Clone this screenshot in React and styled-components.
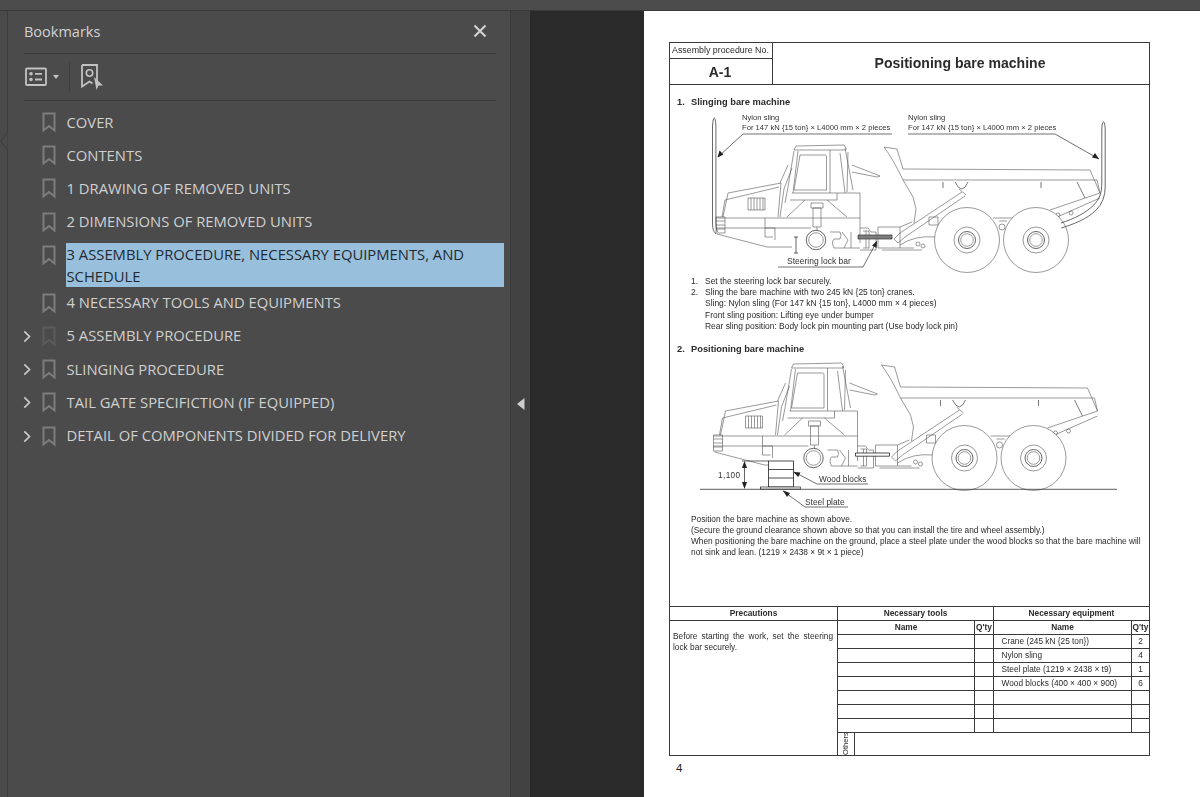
import React from 'react';
import styled, { createGlobalStyle } from 'styled-components';

const Global = createGlobalStyle`
  html, body { margin: 0; padding: 0; background: #4a4a4a; }
  * { box-sizing: border-box; }
`;

const Shell = styled.div`
  width: 1200px; height: 797px; display: flex; flex-direction: column; overflow: hidden;
  font-family: "Open Sans", "Noto Sans", sans-serif;
`;
const TopBar = styled.div`
  height: 11px; flex: none; background: #4c4c4c; border-bottom: 1px solid #393939;
`;
const Workspace = styled.div`flex: 1; min-height: 0; display: flex;`;
const Rail = styled.div`
  position: relative; width: 8px; flex: none; background: #4a4a4a; border-right: 1px solid #3d3d3d;
`;
const RailNotch = styled.svg`position: absolute; left: 0; top: 121px;`;
const Panel = styled.aside`
  width: 502px; flex: none; background: #4b4b4b; display: flex; flex-direction: column;
`;
const PanelHead = styled.div`
  height: 43px; margin: 0 14px 0 16px; flex: none; display: flex; align-items: center;
  justify-content: space-between; border-bottom: 1px solid #3c3c3c;
`;
const PanelTitle = styled.h2`
  margin: 0; font-size: 14.5px; line-height: 20px; font-weight: 400; color: #d2d2d2;
`;
const CloseButton = styled.button`
  width: 16px; height: 16px; margin-right: 8px; padding: 0; background: none; border: 0; display: flex;
  align-items: center; justify-content: center; position: relative; top: -1px;
`;
const Toolbar = styled.div`
  height: 47px; margin: 0 14px 0 16px; flex: none; display: flex; align-items: center;
  border-bottom: 1px solid #3c3c3c;
`;
const ToolIcon = styled.svg`display: block; flex: none; margin-left: ${p => p.$left || 0}px;`;
const ToolSep = styled.span`width: 1px; height: 30px; background: #3f3f3f; margin: 0 11px 0 10px;`;
const Tree = styled.div`padding-top: 5px; flex: 1;`;
const Row = styled.div`
  height: ${p => (p.$tall ? '48px' : '33.2px')}; display: flex; align-items: flex-start; padding-left: 15px; padding-right: 6px;
`;
const Twist = styled.span`
  width: 8px; height: 33px; flex: none; display: flex; align-items: center; justify-content: center;
`;
const Mark = styled.span`
  width: 14px; height: 33px; flex: none; margin-left: 11px; display: flex; align-items: center; justify-content: center;
`;
const Label = styled.div`
  margin: 4.5px 0 0 10px; padding: 0 4px 0 0.5px; flex: 1; font-size: 14.8px; line-height: 22px;
  color: ${p => (p.$selected ? '#1f2a33' : '#d0d0d0')};
  background: ${p => (p.$selected ? '#98c0dc' : 'transparent')};
  white-space: ${p => (p.$selected ? 'normal' : 'nowrap')};
`;
const Splitter = styled.div`
  position: relative; width: 20px; flex: none; background: #424242; border-left: 1px solid #393939;
`;
const SplitArrow = styled.svg`position: absolute; left: 6px; top: 387px;`;
const Viewer = styled.main`flex: 1; background: #2a2a2a; padding-left: 114px; display: flex;`;
const Sheet = styled.div`
  flex: 1; background: #fff; padding: 31px 0 0 25px; color: #2b2b2b;
  font-family: "Liberation Sans", Arial, sans-serif;
`;
const Frame = styled.div`
  width: 481px; height: 714px; border: 1px solid #3a3a3a; display: flex; flex-direction: column; filter: blur(0.3px);
`;
const DocHead = styled.header`
  height: 42px; flex: none; display: grid; grid-template-columns: 103px 1fr; border-bottom: 1px solid #3a3a3a;
`;
const DocNumber = styled.div`display: flex; flex-direction: column; border-right: 1px solid #3a3a3a;`;
const DocNumberLabel = styled.div`
  height: 16px; font-size: 8.85px; line-height: 15px; padding-left: 2px; border-bottom: 1px solid #3a3a3a; white-space: nowrap;
`;
const DocNumberValue = styled.div`
  flex: 1; display: flex; align-items: center; justify-content: center; font-weight: 700; font-size: 14px; padding-right: 2px;
`;
const DocTitle = styled.h1`
  margin: 0; padding-right: 2px; display: flex; align-items: center; justify-content: center; font-size: 14.05px; font-weight: 700;
  position: relative; top: -1px;
`;
const DocBody = styled.section`flex: 1; min-height: 0; padding-top: 11.5px;`;
const SectionTitle = styled.h3`
  margin: ${p => p.$gap || 0}px 0 0 7px; font-size: 9.3px; line-height: 11px; font-weight: 700; display: flex; color: #2b2b2b;
`;
const Num = styled.span`width: 14px; flex: none;`;
const Figure = styled.svg`display: block; width: 478px;`;
const Steps = styled.ol`
  list-style: none; margin: 3.5px 0 0 21px; padding: 0; font-size: 8.45px; line-height: 11.2px;
`;
const Step = styled.li`display: flex; white-space: nowrap;`;
const Para = styled.p`
  margin: 1.5px 4px 0 21px; font-size: 8.33px; line-height: 11px;
`;
const Sheetlet = styled.div`
  height: 149px; flex: none; display: grid; font-size: 8.3px;
  grid-template-columns: 168px 137px 19px 138px 1fr;
  grid-template-rows: repeat(9, 14px) 22px; border-top: 1px solid #3a3a3a;
`;
const Cell = styled.div`
  display: flex; align-items: center; overflow: hidden; white-space: nowrap; padding-bottom: 2px;
  justify-content: ${p => (p.$center ? 'center' : 'flex-start')};
  padding-left: ${p => (p.$center ? 0 : 7.5)}px;
  font-weight: ${p => (p.$bold ? 700 : 400)};
  border-right: ${p => (p.$last ? 0 : '1px solid #3a3a3a')};
  border-bottom: 1px solid #3a3a3a;
  grid-column: ${p => p.$col || 'auto'};
`;
const Caution = styled.div`
  grid-column: 1; grid-row: 2 / span 9; border-right: 1px solid #3a3a3a; padding: 9.5px 4px 0 3px;
  line-height: 11px; font-size: 8.3px; text-align: justify; border-top: 1px solid #3a3a3a; margin-top: -1px;
`;
const Others = styled.div`
  grid-column: 2 / span 4; display: flex; min-width: 0;
`;
const OthersLabel = styled.div`
  width: 17px; border-left: 1px solid #3a3a3a; writing-mode: vertical-rl; transform: rotate(180deg);
  font-size: 7.6px; line-height: 16px; text-align: left;
`;
const PageNo = styled.div`margin: 5px 0 0 7px; font-size: 11.5px; line-height: 14px; color: #222;`;

const Bookmark = ({ dim }) => (
  <svg width="14" height="21" viewBox="0 0 14 21">
    <path d="M1.5 1.5h11v17l-5.5-4.5-5.5 4.5z" fill="none" stroke={dim ? '#5c5c5c' : '#7d7d7d'} strokeWidth="2" />
  </svg>
);
const Chevron = () => (
  <svg width="8" height="13" viewBox="0 0 8 13">
    <path d="M1.3 1.3 6.5 6.5 1.3 11.7" fill="none" stroke="#c9c9c9" strokeWidth="1.7" />
  </svg>
);

const items = [
  { t: 'COVER' },
  { t: 'CONTENTS' },
  { t: '1 DRAWING OF REMOVED UNITS' },
  { t: '2 DIMENSIONS OF REMOVED UNITS' },
  { t: '3 ASSEMBLY PROCEDURE, NECESSARY EQUIPMENTS, AND SCHEDULE', selected: true },
  { t: '4 NECESSARY TOOLS AND EQUIPMENTS' },
  { t: '5 ASSEMBLY PROCEDURE', kids: true, dim: true },
  { t: 'SLINGING PROCEDURE', kids: true },
  { t: 'TAIL GATE SPECIFICTION (IF EQUIPPED)', kids: true },
  { t: 'DETAIL OF COMPONENTS DIVIDED FOR DELIVERY', kids: true },
];

const Wheel = ({ cx }) => (
  <g>
    <circle cx={cx} cy="240" r="32.5" fill="#fff" />
    <circle cx={cx} cy="240" r="13" />
    <circle cx={cx} cy="240" r="8.5" strokeWidth="0.9" />
    <circle cx={cx} cy="240" r="6.3" />
  </g>
);

const Truck = ({ shift, solidBar }) => (
  <g transform={shift} fill="none" stroke="#555" strokeWidth="0.6" strokeLinejoin="round">
    {/* dump body */}
    <path d="M884 147l13 2 6 20 187 1 10 23" />
    <path d="M884 147q9 12 19 33h194l3 13" />
    <path d="M903 180l10 17 3 12-2 14" />
    <path d="M1077 182l8 16M943 182v6M1041 182v6M955 182q7 14 13 0" strokeWidth="0.8" />
    {/* hoist cylinder */}
    <path d="M962 192l-62 41M965 196l-60 41M959 189l7 6" />
    <path d="M900 233l-6 6 4 4 7-6" />
    <rect x="929" y="217" width="9" height="8" />
    {/* rear frame */}
    <path d="M1050 210l50-17M1057 217l43-19M993 218h20M999 221h8" />
    <circle cx="1002" cy="227" r="3" />
    <circle cx="1058" cy="215" r="2" />
    <circle cx="1071" cy="213" r="2" />
    <path d="M900 245q15 -10 35 -8M882 250h40" />
    <circle cx="918" cy="244" r="2" />
    <circle cx="923" cy="246" r="2" />
    {/* cab */}
    <path d="M794 150l2-4 48-1 2 3v2z" />
    <path d="M794 151l-6 36-3 16M798 151l-5 42M845 148l8 42M830 150v43M840 153l5 40M848 152l-1 40" />
    <path d="M800 155h25q1.500 0 1.500 1.500V190H794z" />
    <path d="M852 165l28 11M852 172l25 5M877 177l3-1" />
    <path d="M788 165l-8 18M792 168l-8 21M784 189l-4 28" />
    <path d="M792 193h45" />
    {/* hood */}
    <path d="M728 193l53-10M725 200l54-13M728 193l-5 24M725 200l-3 17M781 183l-3 34" />
    <rect x="748" y="198" width="17" height="12" />
    <path d="M751 198v12M754 198v12M757 198v12M760 198v12M763 198v12" />
    <rect x="716" y="217" width="9" height="16" />
    <path d="M716 221h9M716 225h9M716 229h9M716 218h144M716 228h95M717 234l50 13h25" />
    <path d="M765 218v19h8M765 228h10v12" />
    {/* frame and block */}
    <path d="M837 193h23v50M837 193v7M790 200h47M805 200l-18 17M827 200l20 17" />
    <rect x="813" y="208" width="8" height="19" />
    <path d="M811 203h12v5h-12zM817 227v4" />
    <circle cx="816" cy="240" r="9.700" fill="#fff" strokeWidth="0.9" />
    <circle cx="816" cy="240" r="7.300" />
    <path d="M830 232h10q2 3 0 7h-6q-3 3 0 9h26M842 232l6 8-4 8M851 232v16" />
    <path d="M860 228h8l3 4h5v18h-16" />
    <path d="M863 231h6v17h-6M866 231v17" />
    <rect x="878" y="227" width="22" height="21" />
    <path d="M900 227l12-5M900 248h14" />
    <Wheel cx={967} />
    <Wheel cx={1036} />
    {solidBar
      ? <rect x="858" y="235" width="34" height="4" fill="#7d7d7d" stroke="#333" strokeWidth="0.7" />
      : <rect x="858" y="235" width="34" height="3.200" fill="#fff" stroke="#222" strokeWidth="0.8" />}
  </g>
);

const Lead = ({ d, head }) => (
  <g>
    <path d={d} fill="none" stroke="#333" strokeWidth="0.7" />
    <path d={head} fill="#222" />
  </g>
);
const Note = styled.text`
  font-family: "Liberation Sans", Arial, sans-serif; font-size: ${p => p.$size || 8.4}px; fill: #333;
`;

const FigureOne = () => (
  <Figure viewBox="670 108 478 165" height="165">
    <Truck solidBar />
    <path d="M716 234c-3-3-3.500-6-3.500-12V126q.5-8 1.700-8 1.300 0 1.700 8V222q0 6 1.500 10" fill="none" stroke="#444" strokeWidth="0.8" />
    <path d="M1103.500 122q-1.500 0-1.700 8V185q0 12-8 20c-8 8-20 14-33 18" fill="none" stroke="#444" strokeWidth="0.8" />
    <path d="M1103.500 122q1.500 0 1.700 8V187q0 14-9 23c-9 9-22 14-35 18" fill="none" stroke="#444" strokeWidth="0.8" />
    <Note $size={7.65} x="742" y="120">Nylon sling</Note>
    <Note $size={7.65} x="742" y="130">For 147 kN {'{'}15 ton{'}'} × L4000 mm × 2 pieces</Note>
    <Note $size={7.65} x="908" y="120">Nylon sling</Note>
    <Note $size={7.65} x="908" y="130">For 147 kN {'{'}15 ton{'}'} × L4000 mm × 2 pieces</Note>
    <Lead d="M892 134H743L718 157" head="M717.500 157.500l2-7 4 4z" />
    <Lead d="M908 134h147l44 25" head="M1099 159l-7-1.500 3-4.500z" />
    <Note $size={8.5} x="787" y="264">Steering lock bar</Note>
    <path d="M796 237v16M794 237h4M794 253h4" stroke="#222" strokeWidth="0.7" />
    <Lead d="M778 267h85l14-26" head="M877 241l-.5 7-4.500-2.500z" />
  </Figure>
);
const FigureTwo = () => (
  <Figure viewBox="670 355 478 157" height="157">
    <Truck shift="translate(-2.500 218)" />
    <path d="M700 489.300h417" stroke="#333" strokeWidth="0.8" />
    <rect x="768.500" y="461" width="25" height="26" fill="#fff" stroke="#222" strokeWidth="0.8" />
    <path d="M768.500 469.500h25M768.500 478h25" stroke="#222" strokeWidth="0.8" />
    <rect x="760.500" y="487" width="40" height="2" fill="#fff" stroke="#222" strokeWidth="0.7" />
    <path d="M742 461h26M744.500 462v26" stroke="#222" strokeWidth="0.7" />
    <path d="M744.500 461l2.500 7h-5zM744.500 489l2.500-7h-5z" fill="#222" />
    <Note $size={8.2} x="718" y="478" letterSpacing="0.4">1,100</Note>
    <Note $size={8.3} x="819" y="482">Wood blocks</Note>
    <Lead d="M868 484h-51l-23-12" head="M793.500 472l7 .5-2.300 4.500z" />
    <Note $size={8.4} x="805" y="505">Steel plate</Note>
    <Lead d="M848 507h-43l-22-16" head="M783 490.500l7 2.500-3 4z" />
  </Figure>
);

const equipment = [
  ['Crane (245 kN {25 ton})', '2'],
  ['Nylon sling', '4'],
  ['Steel plate (1219 × 2438 × t9)', '1'],
  ['Wood blocks (400 × 400 × 900)', '6'],
  ['', ''], ['', ''], ['', ''],
];

export default function App() {
  return (
    <Shell>
      <Global />
      <TopBar />
      <Workspace>
        <Rail>
          <RailNotch width="8" height="18" viewBox="0 0 8 18">
            <path d="M7.500 0 1 9l6.500 9" fill="#4b4b4b" stroke="#3d3d3d" />
          </RailNotch>
        </Rail>
        <Panel>
          <PanelHead>
            <PanelTitle>Bookmarks</PanelTitle>
            <CloseButton aria-label="Close">
              <svg width="14" height="14" viewBox="0 0 14 14">
                <path d="M1.500 1.500l11 11M12.500 1.500l-11 11" stroke="#cfcfcf" strokeWidth="2.200" />
              </svg>
            </CloseButton>
          </PanelHead>
          <Toolbar>
            <ToolIcon $left={1} width="23" height="20" viewBox="0 0 23 20">
              <rect x="1" y="1.500" width="20" height="16.500" rx="1" fill="none" stroke="#c2c2c2" strokeWidth="1.800" />
              <circle cx="6" cy="6.800" r="1.800" fill="#c2c2c2" />
              <circle cx="6" cy="12.500" r="1.800" fill="#c2c2c2" />
              <path d="M10 6.800h7M10 12.500h7" stroke="#c2c2c2" strokeWidth="1.800" />
            </ToolIcon>
            <ToolIcon $left={5} width="6" height="4" viewBox="0 0 6 4">
              <path d="M0 0h6L3 4z" fill="#c2c2c2" />
            </ToolIcon>
            <ToolSep />
            <ToolIcon width="23" height="26" viewBox="0 0 23 26">
              <path d="M1 1h15v17M1 1v21.500l7.500-5 3 2" fill="none" stroke="#c2c2c2" strokeWidth="1.800" />
              <circle cx="8.500" cy="9" r="3.200" fill="none" stroke="#c2c2c2" strokeWidth="1.600" />
              <path d="M13 13l9 8.500h-4.500l-2 4.500z" fill="#c2c2c2" />
            </ToolIcon>
          </Toolbar>
          <Tree>
            {items.map(it => (
              <Row key={it.t} $tall={it.selected}>
                <Twist>{it.kids && <Chevron />}</Twist>
                <Mark><Bookmark dim={it.dim} /></Mark>
                <Label $selected={it.selected}>{it.t}</Label>
              </Row>
            ))}
          </Tree>
        </Panel>
        <Splitter>
          <SplitArrow width="8" height="12" viewBox="0 0 8 12"><path d="M7.500 0v12L0 6z" fill="#cdcdcd" /></SplitArrow>
        </Splitter>
        <Viewer>
          <Sheet>
            <Frame>
              <DocHead>
                <DocNumber>
                  <DocNumberLabel>Assembly procedure No.</DocNumberLabel>
                  <DocNumberValue>A-1</DocNumberValue>
                </DocNumber>
                <DocTitle>Positioning bare machine</DocTitle>
              </DocHead>
              <DocBody>
                <SectionTitle><Num>1.</Num>Slinging bare machine</SectionTitle>
                <FigureOne />
                <Steps>
                  <Step><Num>1.</Num>Set the steering lock bar securely.</Step>
                  <Step><Num>2.</Num>Sling the bare machine with two 245 kN {'{'}25 ton{'}'} cranes.</Step>
                  <Step><Num />Sling: Nylon sling (For 147 kN {'{'}15 ton{'}'}, L4000 mm × 4 pieces)</Step>
                  <Step><Num />Front sling position: Lifting eye under bumper</Step>
                  <Step><Num />Rear sling position: Body lock pin mounting part (Use body lock pin)</Step>
                </Steps>
                <SectionTitle $gap={12}><Num>2.</Num>Positioning bare machine</SectionTitle>
                <FigureTwo />
                <Para>
                  Position the bare machine as shown above.<br />
                  (Secure the ground clearance shown above so that you can install the tire and wheel assembly.)<br />
                  When positioning the bare machine on the ground, place a steel plate under the wood blocks so that the bare machine will not sink and lean.  (1219 × 2438 × 9t × 1 piece)
                </Para>
              </DocBody>
              <Sheetlet>
                <Cell $center $bold>Precautions</Cell>
                <Cell $center $bold $col="span 2">Necessary tools</Cell>
                <Cell $center $bold $col="span 2" $last>Necessary equipment</Cell>
                <Caution>Before starting the work, set the steering lock bar securely.</Caution>
                <Cell $center $bold>Name</Cell>
                <Cell $center $bold>Q'ty</Cell>
                <Cell $center $bold>Name</Cell>
                <Cell $center $bold $last>Q'ty</Cell>
                {equipment.map(([name, qty], i) => (
                  <React.Fragment key={i}>
                    <Cell />
                    <Cell />
                    <Cell>{name}</Cell>
                    <Cell $center $last>{qty}</Cell>
                  </React.Fragment>
                ))}
                <Others>
                  <OthersLabel>Others</OthersLabel>
                </Others>
              </Sheetlet>
            </Frame>
            <PageNo>4</PageNo>
          </Sheet>
        </Viewer>
      </Workspace>
    </Shell>
  );
}
